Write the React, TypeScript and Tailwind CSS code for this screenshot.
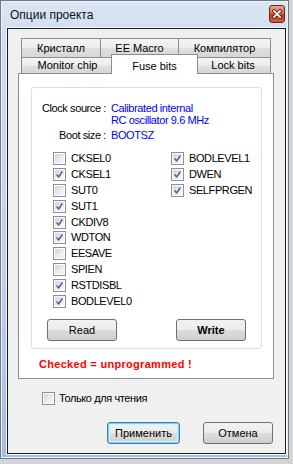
import React from 'react'

const font = { fontFamily: '"Liberation Sans", Arial, sans-serif' }

function Box({ checked }: { checked?: boolean }) {
  return (
    <div className="flex h-[13px] w-[13px] shrink-0 items-center justify-center border border-[#8e8f8f] bg-white p-px">
      <div className="flex h-full w-full items-center justify-center bg-[linear-gradient(135deg,#cfd2d6_0%,#e9eaec_50%,#f7f7f7_100%)]">
        {checked && (
          <svg width="11" height="11" viewBox="0 0 11 11">
            <polyline points="2,5.5 4.5,8.5 9,1.8" fill="none" stroke="#4a5d9a" strokeWidth="1.8" strokeLinejoin="round" />
          </svg>
        )}
      </div>
    </div>
  )
}

function Check({ label, checked }: { label: string; checked?: boolean }) {
  return (
    <div className="flex h-[15.8px] items-center gap-[5px]">
      <Box checked={checked} />
      <span className="text-[11px] leading-none tracking-[-0.4px] text-black">{label}</span>
    </div>
  )
}

const btn =
  'flex items-center justify-center rounded-[3px] border text-[11px] text-black bg-[linear-gradient(to_bottom,#f2f2f2_0%,#ebebeb_50%,#dddddd_51%,#cfcfcf_100%)]'

function Tab({ label, w, first }: { label: string; w: string; first?: boolean }) {
  return (
    <div
      className={`${w} ${first ? '' : '-ml-px'} flex h-full items-center justify-center border border-b-0 border-[#898c95] bg-[linear-gradient(to_bottom,#f5f5f5_0%,#ebebeb_50%,#e0e0e0_51%,#d6d6d6_100%)] text-[11px] text-black`}
    >
      {label}
    </div>
  )
}

export default function App() {
  const col1: [string, boolean][] = [
    ['CKSEL0', false],
    ['CKSEL1', true],
    ['SUT0', false],
    ['SUT1', true],
    ['CKDIV8', true],
    ['WDTON', true],
    ['EESAVE', false],
    ['SPIEN', false],
    ['RSTDISBL', true],
    ['BODLEVEL0', true],
  ]
  const col2: [string, boolean][] = [
    ['BODLEVEL1', true],
    ['DWEN', true],
    ['SELFPRGEN', true],
  ]

  return (
    <div className="h-[464px] w-[293px] overflow-hidden bg-[#d4d4d4]" style={font}>
      <div className="flex h-[459px] w-[289px] flex-col border border-[#6d7888] bg-[linear-gradient(to_bottom,#dbe6f4_0%,#cfdcef_10%,#bfcfe9_60%,#a9bae2_100%)] shadow-[inset_0_0_0_1px_#eef3fa]">
        {/* title bar */}
        <div className="flex h-[27px] shrink-0 items-center justify-between pl-[9px] pr-[3px]">
          <span className="text-[12px] text-[#111]">Опции проекта</span>
          <div className="mt-[-2px] flex h-[18px] w-[16px] items-center justify-center rounded-[3px] border border-[#6b2a1e] bg-[linear-gradient(to_bottom,#eba794_0%,#d6694f_45%,#c2391f_55%,#d65a3e_100%)]">
            <svg width="10" height="10" viewBox="0 0 10 10">
              <path d="M2 2 L8 8 M8 2 L2 8" stroke="#5a1a10" strokeWidth="3.4" strokeLinecap="square" />
              <path d="M2 2 L8 8 M8 2 L2 8" stroke="#ffffff" strokeWidth="1.8" strokeLinecap="square" />
            </svg>
          </div>
        </div>

        {/* client */}
        <div className="ml-[6px] flex h-[426px] w-[279px] flex-col border border-[#1a1a1a] bg-[#f0f0f0] shadow-[0_0_0_1px_#f4f7fc]">
          <div className="ml-[10px] mt-[9px] w-[256px]">
            <div className="ml-[3px] flex h-[19px]">
              <Tab label="Кристалл" w="w-[80px]" first />
              <Tab label="EE Macro" w="w-[79px]" />
              <Tab label="Компилятор" w="w-[93px]" />
            </div>
            <div className="ml-[3px] flex h-[16px] items-start">
              <Tab label="Monitor chip" w="w-[93px]" first />
              <div className="relative z-10 -mb-px -ml-[3px] -mt-[3px] flex h-[20px] w-[87px] items-start justify-center border border-b-0 border-[#898c95] bg-white pt-[3px] text-[11px] text-black">
                Fuse bits
              </div>
              <div className="-ml-[3px] flex h-full w-[76px] items-center justify-center border border-b-0 border-[#898c95] bg-[linear-gradient(to_bottom,#f5f5f5_0%,#ebebeb_50%,#e0e0e0_51%,#d6d6d6_100%)] text-[11px] text-black">
                Lock bits
              </div>
            </div>

            {/* panel */}
            <div className="flex h-[306px] w-[256px] flex-col border border-[#898c95] bg-white">
              <div className="ml-[12px] mt-[13px] flex h-[262px] w-[231px] flex-col rounded-[3px] border border-[#d5dfe5]">
                <div className="mt-[14px] grid grid-cols-[74px_1fr] gap-x-[5px] text-[11px] leading-[12px] tracking-[-0.4px]">
                  <span className="text-right text-black">Clock source :</span>
                  <span className="text-[#0000ff]">
                    Calibrated internal
                    <br />
                    RC oscillator 9.6 MHz
                  </span>
                  <span className="mt-[3px] text-right text-black">Boot size :</span>
                  <span className="mt-[3px] text-[#0000ff]">BOOTSZ</span>
                </div>

                <div className="ml-[21px] mt-[10px] flex">
                  <div className="flex w-[118px] flex-col">
                    {col1.map(([l, c]) => (
                      <Check key={l} label={l} checked={c} />
                    ))}
                  </div>
                  <div className="flex flex-col">
                    {col2.map(([l, c]) => (
                      <Check key={l} label={l} checked={c} />
                    ))}
                  </div>
                </div>

                <div className="ml-[15px] mt-[10px] flex gap-[59px]">
                  <div className={`${btn} h-[22px] w-[70px] border-[#707070]`}>Read</div>
                  <div className={`${btn} h-[22px] w-[70px] border-[#707070] font-bold`}>Write</div>
                </div>
              </div>
              <div className="ml-[20px] mt-[9px] text-[11px] font-bold leading-[12px] tracking-[0.3px] text-[#ff0000]">
                Checked = unprogrammed !
              </div>
            </div>
          </div>

          <div className="ml-[34px] mt-[13px] flex items-center gap-[4px]">
            <Box />
            <span className="text-[11px] leading-none tracking-[-0.4px] text-black">Только для чтения</span>
          </div>

          <div className="mr-[12px] mt-[17px] flex justify-end gap-[23px]">
            <div className={`${btn} h-[22px] w-[73px] border-[#3c7fb1] shadow-[inset_0_0_0_1px_#6fd0f5,inset_0_0_0_2px_#d4f1fc]`}>
              Применить
            </div>
            <div className={`${btn} h-[22px] w-[70px] border-[#707070]`}>Отмена</div>
          </div>
        </div>
      </div>
    </div>
  )
}
